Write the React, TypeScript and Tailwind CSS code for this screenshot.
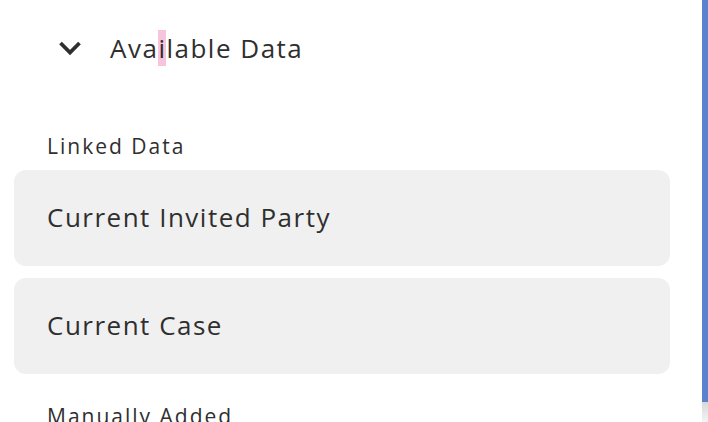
export default function App() {
	return (
		<div className="flex h-screen w-full overflow-hidden bg-white font-['Open_Sans',sans-serif] text-[#2f2f2f]">
			<div className="flex-1 min-w-0">
				<div className="flex h-[96px] items-center pl-[58px]">
					<svg width="24" height="16" viewBox="0 0 24 16" className="shrink-0">
						<path d="M2.5 3 L12 12.5 L21.5 3" fill="none" stroke="#2f2f2f" strokeWidth="3.8" />
					</svg>
					<h2 className="ml-[28px] text-[26px] tracking-[1.5px]">
						Ava<span className="bg-[#f7c4de]">i</span>lable Data
					</h2>
				</div>
				<div className="mt-[35px] pl-[47px] text-[21px] tracking-[2px]">Linked Data</div>
				<div className="mt-[7px] flex flex-col gap-[12px] pl-[14px] pr-[32px]">
					<div className="flex h-[96px] items-center rounded-[12px] bg-[#f0f0f0] pl-[33px] text-[26px] tracking-[1.5px]">
						Current Invited Party
					</div>
					<div className="flex h-[96px] items-center rounded-[12px] bg-[#f0f0f0] pl-[33px] text-[26px] tracking-[1.5px]">
						Current Case
					</div>
				</div>
				<div className="mt-[27px] pl-[47px] text-[21px] tracking-[2px]">Manually Added</div>
			</div>
			<div className="flex w-[6px] flex-col">
				<div className="h-[402px] bg-[#5a80d0]" />
				<div className="flex-1 bg-gradient-to-b from-[#d8d8d8] to-[#f4f4f4]" />
			</div>
		</div>
	);
}
